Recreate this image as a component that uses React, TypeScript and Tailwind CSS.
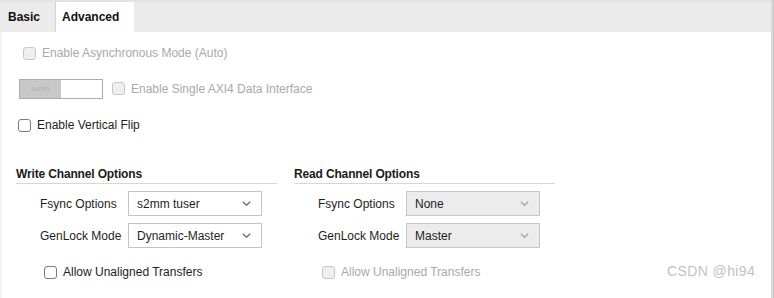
import React from "react";

function Check({ disabled }: { disabled?: boolean }) {
  return (
    <span
      className={
        "inline-block w-[13px] h-[13px] rounded-[3px] border shrink-0 " +
        (disabled ? "border-[#c6c6c6] bg-[#efefef]" : "border-[#7a7a7a] bg-white")
      }
    />
  );
}

function Chevron({ light }: { light?: boolean }) {
  return (
    <svg width="9" height="5" viewBox="0 0 9 5" className="shrink-0">
      <path d="M0.8 0.8 L4.5 4.2 L8.2 0.8" fill="none" stroke={light ? "#a6a6a6" : "#6e6e6e"} strokeWidth="1.4" />
    </svg>
  );
}

function Select({ value, disabled }: { value: string; disabled?: boolean }) {
  return (
    <div
      className={
        "w-[134px] h-[25px] flex items-center justify-between pl-[8px] pr-[10px] border " +
        (disabled ? "bg-[#ececec] border-[#c8c8c8]" : "bg-white border-[#c4c4c4]")
      }
    >
      <span className="text-[#1e1e1e]">{value}</span>
      <Chevron light={disabled} />
    </div>
  );
}

function Channel({
  title,
  fsync,
  genlock,
  disabled,
}: {
  title: string;
  fsync: string;
  genlock: string;
  disabled?: boolean;
}) {
  return (
    <div className="w-[261px] flex flex-col">
      <div className="h-[19px] flex items-center border-b border-[#d6d6d6] font-bold text-[#1a1a1a] tracking-[-0.15px]">
        {title}
      </div>
      <div className="mt-[7px] flex items-center">
        <span className="w-[112px] pl-[24px] text-[#1e1e1e]">Fsync Options</span>
        <Select value={fsync} disabled={disabled} />
      </div>
      <div className="mt-[7px] flex items-center">
        <span className="w-[112px] pl-[24px] text-[#1e1e1e]">GenLock Mode</span>
        <Select value={genlock} disabled={disabled} />
      </div>
      <div className="mt-[14px] h-[20px] flex items-center pl-[28px] gap-[6px]">
        <Check disabled={disabled} />
        <span className={disabled ? "text-[#a9a9a9]" : "text-[#1e1e1e]"}>Allow Unaligned Transfers</span>
      </div>
    </div>
  );
}

export default function App() {
  return (
    <div
      className="relative w-[774px] h-[298px] overflow-hidden bg-[#e2e2e2] flex text-[12px] leading-none"
      style={{ fontFamily: '"Liberation Sans", Arial, sans-serif' }}
    >
      <div className="w-[771px] flex flex-col pt-[2px]">
        <div className="h-[30px] bg-[#ebebeb] flex">
          <div className="w-[56px] pl-[8px] flex items-center font-bold text-[#111] border-r border-[#d2d2d2]">Basic</div>
          <div className="w-[78px] pl-[6px] flex items-center font-bold text-[#111] bg-white">Advanced</div>
        </div>
        <div className="flex-1 bg-white border-l-2 border-[#f3f3f3] flex flex-col">
          <div className="mt-[11px] h-[20px] flex items-center pl-[21px] gap-[6px]">
            <Check disabled />
            <span className="text-[#a9a9a9]">Enable Asynchronous Mode (Auto)</span>
          </div>
          <div className="mt-[16px] h-[20px] flex items-center pl-[17px]">
            <div className="w-[84px] h-[20px] flex border border-[#ababab]">
              <div className="w-[41px] bg-[#c8c8c8] flex items-center justify-center text-[6px] font-bold text-[#b2b2b2] tracking-[0.5px]">
                AUTO
              </div>
              <div className="flex-1 bg-white" />
            </div>
            <span className="ml-[9px]">
              <Check disabled />
            </span>
            <span className="ml-[6px] text-[#a9a9a9]">Enable Single AXI4 Data Interface</span>
          </div>
          <div className="mt-[16px] h-[20px] flex items-center pl-[16px] gap-[6px]">
            <Check />
            <span className="text-[#1e1e1e]">Enable Vertical Flip</span>
          </div>
          <div className="mt-[30px] flex pl-[14px] gap-[17px]">
            <Channel title="Write Channel Options" fsync="s2mm tuser" genlock="Dynamic-Master" />
            <Channel title="Read Channel Options" fsync="None" genlock="Master" disabled />
          </div>
        </div>
      </div>
      <div className="w-[3px] bg-[#d8d8d8] border-r border-[#c8c8c8]" />
      <div className="absolute left-[667px] top-[264px] text-[14px] font-light tracking-[0.4px] text-[#c2c2c2]">
        CSDN @hi94
      </div>
    </div>
  );
}
